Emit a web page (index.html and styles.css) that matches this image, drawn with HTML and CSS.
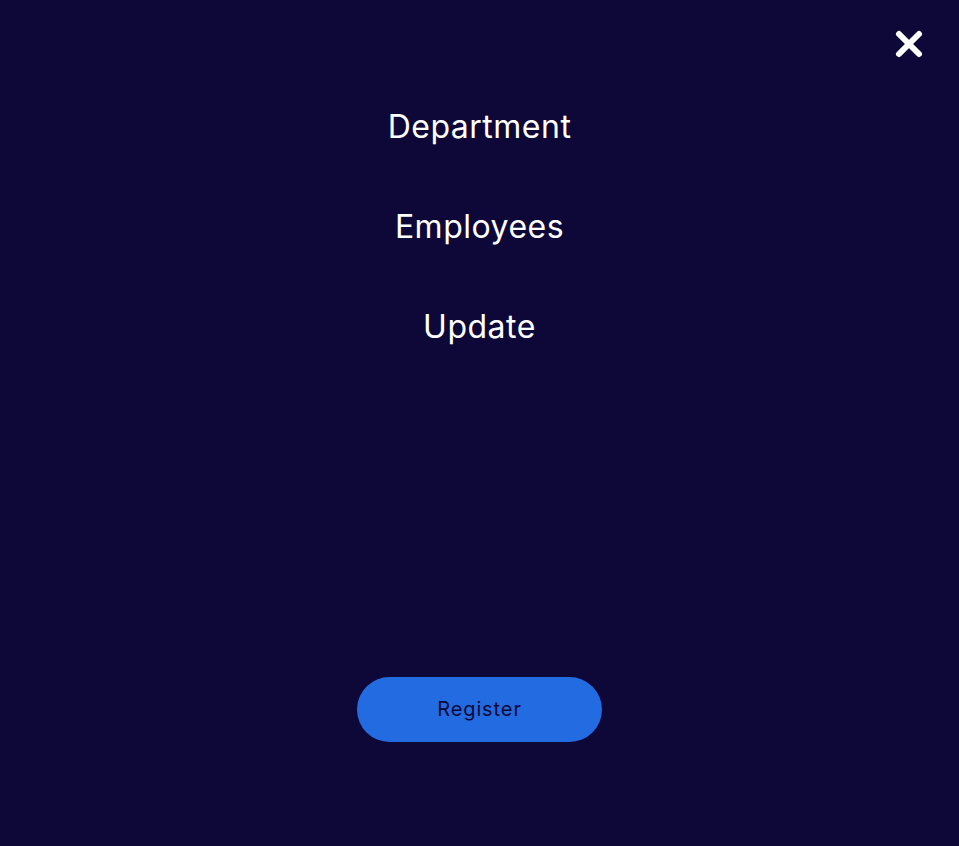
FILE: index.html
```html
<!DOCTYPE html>
<html lang="en">
<head>
<meta charset="utf-8">
<title>Menu</title>
<link rel="stylesheet" href="styles.css">
</head>
<body>
<div class="menu">
  <header class="menu-header">
    <button class="close" aria-label="Close">
      <svg width="30" height="30" viewBox="0 0 30 30"><path d="M5 5 L25 25 M25 5 L5 25" stroke="#fff" stroke-width="6" stroke-linecap="round"/></svg>
    </button>
  </header>
  <nav class="menu-nav">
    <a class="menu-link" href="#">Department</a>
    <a class="menu-link" href="#">Employees</a>
    <a class="menu-link" href="#">Update</a>
  </nav>
  <div class="menu-actions">
    <button class="register">Register</button>
  </div>
</div>
</body>
</html>
```

FILE: styles.css
```css
html, body {
  margin: 0;
  padding: 0;
  background: #0e0838;
}
body {
  font-family: "Inter", "Noto Sans", sans-serif;
}
.menu {
  display: flex;
  flex-direction: column;
  height: 846px;
}
.menu-header {
  display: flex;
  justify-content: flex-end;
  height: 77px;
  padding: 29px 35px 0 0;
  box-sizing: border-box;
}
.close {
  background: none;
  border: 0;
  padding: 0;
  width: 30px;
  height: 30px;
  cursor: pointer;
}
.close svg { display: block; }
.menu-nav {
  display: flex;
  flex-direction: column;
  align-items: center;
}
.menu-link {
  display: block;
  height: 100px;
  line-height: 100px;
  color: #fff;
  text-decoration: none;
  font-size: 32px;
  letter-spacing: 0.5px;
  font-weight: 400;
}
.menu-actions {
  display: flex;
  justify-content: center;
  margin-top: 300px;
}
.register {
  width: 245px;
  height: 65px;
  padding: 0 0 2px;
  border: 0;
  border-radius: 33px;
  background: #236be0;
  color: #0e0838;
  font-family: "Inter", "Noto Sans", sans-serif;
  font-size: 20px;
  letter-spacing: 0.9px;
  cursor: pointer;
}
```
